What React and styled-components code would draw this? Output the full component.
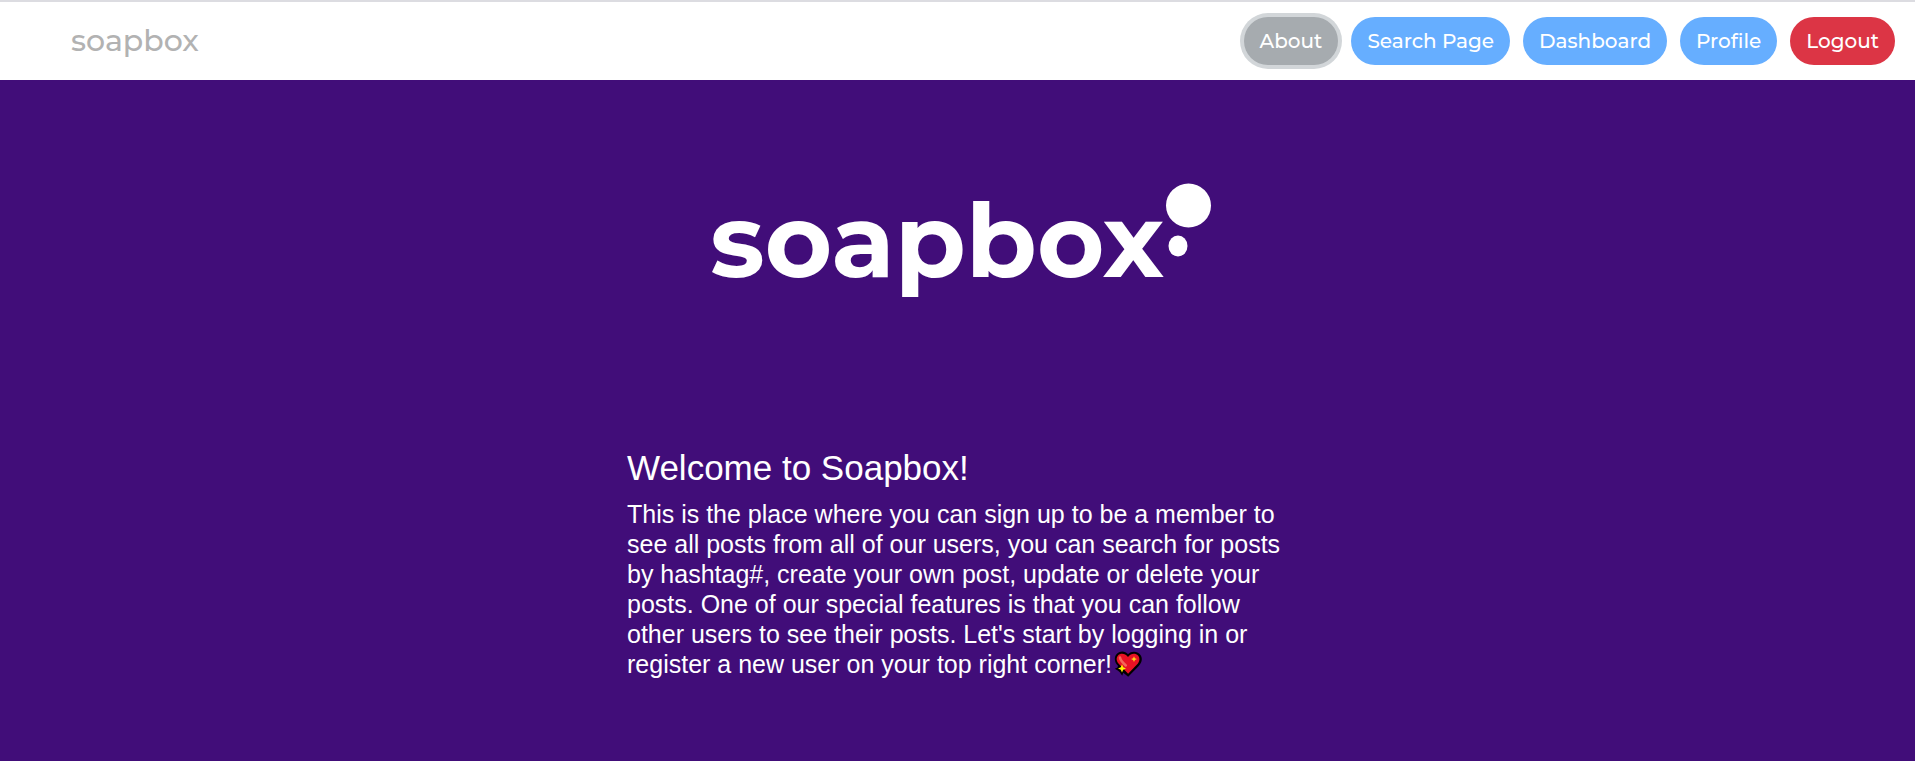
import React from "react";
import styled, { createGlobalStyle } from "styled-components";

const GlobalStyle = createGlobalStyle`
  *, *::before, *::after { box-sizing: border-box; }
  body {
    margin: 0;
    background: #410d79;
    color: #fff;
    font-family: "Liberation Sans", Arial, sans-serif;
  }
`;

const Header = styled.header`
  display: flex;
  align-items: center;
  justify-content: space-between;
  height: 80px;
  padding: 0 20px 0 71px;
  border-top: 2px solid #dcdce1;
  background: #fff;
  font-family: Montserrat, Inter, sans-serif;
`;

const Brand = styled.a`
  color: #b2b2b2;
  font-size: 30px;
  font-weight: 500;
  line-height: 40px;
  text-decoration: none;
`;

const Nav = styled.nav`
  display: flex;
  gap: 13px;
`;

const tones = {
  blue: "#66aeff",
  gray: "#a6abaf",
  red: "#dc3545",
};

const NavButton = styled.button`
  height: 48px;
  padding: 0 16px;
  border: 0;
  border-radius: 24px;
  background: ${({ $tone }) => tones[$tone]};
  box-shadow: ${({ $active }) => ($active ? "0 0 0 4px #d2d6d9" : "none")};
  color: #fff;
  font-family: inherit;
  font-size: 20px;
  font-weight: 500;
  line-height: 30px;
  cursor: pointer;
`;

const Main = styled.main`
  display: flex;
  flex-direction: column;
  align-items: center;
  padding: 96px 24px 80px;
`;

const Logo = styled.svg`
  display: block;
  width: 520px;
  max-width: 100%;
  height: auto;
`;

const LogoText = styled.text`
  fill: #fff;
  font-family: Montserrat, Inter, sans-serif;
  font-size: 103px;
  font-weight: 700;
`;

const Intro = styled.section`
  width: 100%;
  max-width: 661px;
  margin-top: 111px;
`;

const Title = styled.h1`
  margin: 0 0 10px;
  font-size: 35px;
  font-weight: 400;
  line-height: 42px;
`;

const Copy = styled.p`
  margin: 0;
  font-size: 25px;
  line-height: 30px;
`;

const HeartIcon = styled.svg`
  width: 28px;
  height: 26px;
  margin-left: 2px;
  vertical-align: -4px;
`;

const links = [
  { label: "About", tone: "gray", active: true },
  { label: "Search Page", tone: "blue" },
  { label: "Dashboard", tone: "blue" },
  { label: "Profile", tone: "blue" },
  { label: "Logout", tone: "red" },
];

function SparklingHeart() {
  return (
    <HeartIcon viewBox="0 0 28 26" role="img" aria-label="sparkling heart">
      <path
        d="M14 3.200C11.500 .300 8 0 5 1.300C1.500 3 .200 6.500 1.100 10C1.600 12 2.700 13.500 4 14.800L3.500 16.500L.800 17.800L3.800 19.400L5.800 21.300L8.200 24.800L9.300 21.700L14.200 25.700L24.500 15.300C27.500 12.200 28.800 8.200 27 4.700C24.500 .200 17.800-.900 14 3.200Z"
        fill="#000"
      />
      <path
        d="M14 6C11 2 6.500 2 4.200 4.200C2 6.500 2.200 10 4.700 12.700L14.100 22.700L23 13.600C25.800 10.700 26.200 7 24 4.500C21.500 1.800 17 2 14 6Z"
        fill="#e81224"
      />
      <path
        d="M6 6.500C6.400 9.500 8.500 11.500 11.800 14.500"
        fill="none"
        stroke="#f4675a"
        strokeWidth="2.500"
        strokeLinecap="round"
      />
      <path
        d="M8 13.300L9.200 16.300L12 17.500L9.200 18.700L8 21.500L6.800 18.700L4 17.500L6.800 16.300Z"
        fill="#fff100"
      />
      <path
        d="M20 5.200L20.900 7.200L23 8L20.900 8.900L20 10.900L19.100 8.900L17 8L19.100 7.200Z"
        fill="#ffd51c"
      />
    </HeartIcon>
  );
}

export default function App() {
  return (
    <>
      <GlobalStyle />
      <Header>
        <Brand href="#">soapbox</Brand>
        <Nav>
          {links.map(({ label, tone, active }) => (
            <NavButton key={label} type="button" $tone={tone} $active={active}>
              {label}
            </NavButton>
          ))}
        </Nav>
      </Header>
      <Main>
        <Logo viewBox="0 0 520 160" role="img" aria-label="soapbox">
          <LogoText x="12" y="101">soapbox</LogoText>
          <ellipse cx="490.500" cy="29.500" rx="22.500" ry="22" fill="#fff" />
          <ellipse cx="480" cy="70" rx="9.500" ry="10.500" fill="#fff" />
        </Logo>
        <Intro>
          <Title>Welcome to Soapbox!</Title>
          <Copy>
            This is the place where you can sign up to be a member to see all
            posts from all of our users, you can search for posts by hashtag#,
            create your own post, update or delete your posts. One of our
            special features is that you can follow other users to see their
            posts. Let's start by logging in or register a new user on your top
            right corner!<SparklingHeart />
          </Copy>
        </Intro>
      </Main>
    </>
  );
}
